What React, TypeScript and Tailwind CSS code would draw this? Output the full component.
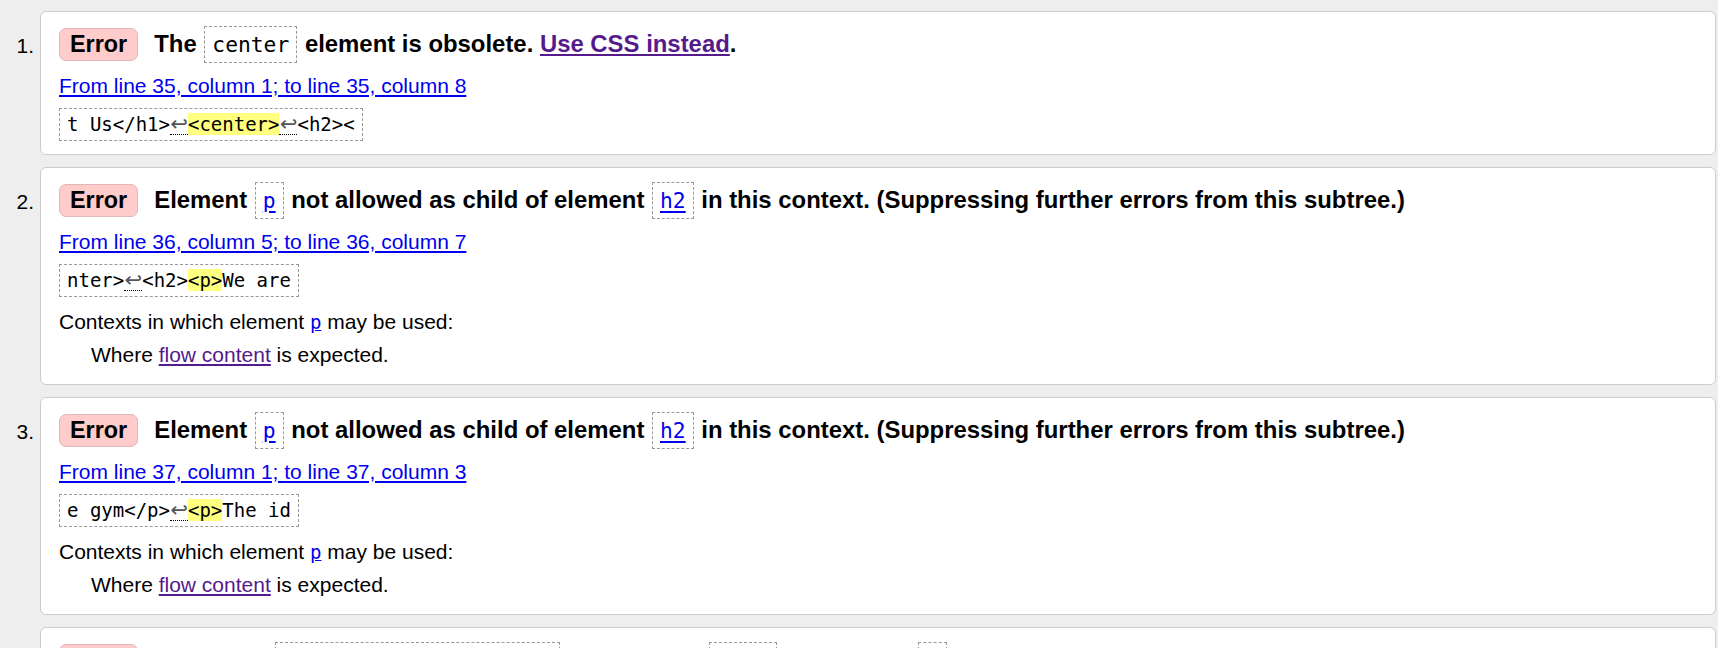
import type { ReactNode } from "react";

// Validator-style error list
const sans = "font-['Liberation_Sans',Arial,sans-serif]";
const mono = "font-['DejaVu_Sans_Mono','Liberation_Mono',monospace]";

function Code({ children, link }: { children: ReactNode; link?: boolean }) {
    return (
        <span className={`${mono} inline-block h-[37px] leading-[36px] px-[7px] mx-[1px] border border-dashed border-[#999] text-[21.3px] font-normal ${link ? "text-[#0000ee] underline underline-offset-[3px]" : "text-black"}`}>
            {children}
        </span>
    );
}

function Ret() {
    return (
        <span className="inline-block w-[18px] text-center text-[#555] font-['DejaVu_Sans',sans-serif] text-[21px] leading-[20px] border-b border-dotted border-black">
            ↩
        </span>
    );
}

function Extract({ children }: { children: ReactNode }) {
    return (
        <div className={`${mono} inline-block h-[33px] leading-[31px] px-[7px] border border-dashed border-[#999] text-[19px] text-black whitespace-pre`}>
            {children}
        </div>
    );
}

function Mark({ children }: { children: ReactNode }) {
    return <span className="bg-[#ffff80]">{children}</span>;
}

function Contexts() {
    return (
        <>
            <p className="mt-[13px] leading-[24px]">
                Contexts in which element <a className={`${mono} text-[19px] text-[#0000ee] underline`}>p</a> may be used:
            </p>
            <p className="mt-[9px] leading-[24px] pl-[32px]">
                Where <a className="text-[#551a8b] underline">flow content</a> is expected.
            </p>
        </>
    );
}

type Msg = { title: ReactNode; loc: string; extract: ReactNode; contexts?: boolean };

const messages: Msg[] = [
    {
        title: (
            <>
                The <Code>center</Code> element is obsolete.{" "}
                <a className="text-[#551a8b] underline">Use CSS instead</a>.
            </>
        ),
        loc: "From line 35, column 1; to line 35, column 8",
        extract: (
            <>
                t Us&lt;/h1&gt;<Ret /><Mark>&lt;center&gt;</Mark><Ret />&lt;h2&gt;&lt;
            </>
        ),
    },
    {
        title: (
            <>
                Element <Code link>p</Code> not allowed as child of element <Code link>h2</Code> in this context. (Suppressing further errors from this subtree.)
            </>
        ),
        loc: "From line 36, column 5; to line 36, column 7",
        extract: (
            <>
                nter&gt;<Ret />&lt;h2&gt;<Mark>&lt;p&gt;</Mark>We are
            </>
        ),
        contexts: true,
    },
    {
        title: (
            <>
                Element <Code link>p</Code> not allowed as child of element <Code link>h2</Code> in this context. (Suppressing further errors from this subtree.)
            </>
        ),
        loc: "From line 37, column 1; to line 37, column 3",
        extract: (
            <>
                e gym&lt;/p&gt;<Ret /><Mark>&lt;p&gt;</Mark>The id
            </>
        ),
        contexts: true,
    },
    {
        title: (
            <>
                Bad value <Code>our classes page.html</Code> for attribute <Code link>href</Code> on element <Code link>a</Code>: Illegal character in path segment: space is not allowed.
            </>
        ),
        loc: "From line 38, column 1; to line 38, column 40",
        extract: <>&lt;a href="our classes page.html"&gt;</>,
    },
];

export default function App() {
    return (
        <main className={`${sans} min-h-screen bg-[#eeeeee] pt-[11px] text-[21px] text-black overflow-hidden`}>
            <ol className="flex flex-col gap-[12px]">
                {messages.map((m, i) => (
                    <li key={i} className="flex">
                        <div className="w-[34px] text-right pt-[23px] leading-[24px] shrink-0">{i + 1}.</div>
                        <div className="flex-1 ml-[6px] mr-[2px] bg-white border border-[#cccccc] rounded-[6px] pt-[14px] pl-[18px] pr-4 pb-[13px]">
                            <div className="flex items-center gap-[16px] min-h-[37px]">
                                <span className="h-[33px] leading-[31px] px-[10px] bg-[#ffcccc] border border-[#e0b8b8] rounded-[7px] text-[23.4px] font-bold shrink-0">
                                    Error
                                </span>
                                <div className="text-[23.9px] font-bold leading-[26px]">{m.title}</div>
                            </div>
                            <div className="mt-[11px] leading-[24px]">
                                <a className="text-[#0000ee] underline">{m.loc}</a>
                            </div>
                            <div className="mt-[10px]">
                                <Extract>{m.extract}</Extract>
                            </div>
                            {m.contexts && <div className="pb-[4px]"><Contexts /></div>}
                        </div>
                    </li>
                ))}
            </ol>
        </main>
    );
}
